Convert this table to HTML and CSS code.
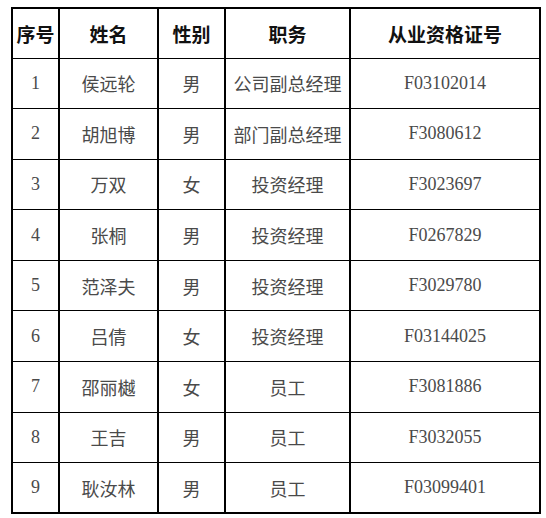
FILE: index.html
```html
<!DOCTYPE html>
<html lang="zh-CN">
<head>
<meta charset="utf-8">
<title>从业资格</title>
<link rel="stylesheet" href="styles.css">
</head>
<body>
<table class="roster">
  <colgroup>
    <col class="c1"><col class="c2"><col class="c3"><col class="c4"><col class="c5">
  </colgroup>
  <thead>
    <tr class="head"><th>序号</th><th>姓名</th><th>性别</th><th>职务</th><th>从业资格证号</th></tr>
  </thead>
  <tbody>
    <tr><td>1</td><td>侯远轮</td><td>男</td><td>公司副总经理</td><td>F03102014</td></tr>
    <tr><td>2</td><td>胡旭博</td><td>男</td><td>部门副总经理</td><td>F3080612</td></tr>
    <tr><td>3</td><td>万双</td><td>女</td><td>投资经理</td><td>F3023697</td></tr>
    <tr><td>4</td><td>张桐</td><td>男</td><td>投资经理</td><td>F0267829</td></tr>
    <tr><td>5</td><td>范泽夫</td><td>男</td><td>投资经理</td><td>F3029780</td></tr>
    <tr><td>6</td><td>吕倩</td><td>女</td><td>投资经理</td><td>F03144025</td></tr>
    <tr><td>7</td><td>邵丽樾</td><td>女</td><td>员工</td><td>F3081886</td></tr>
    <tr><td>8</td><td>王吉</td><td>男</td><td>员工</td><td>F3032055</td></tr>
    <tr><td>9</td><td>耿汝林</td><td>男</td><td>员工</td><td>F03099401</td></tr>
  </tbody>
</table>
</body>
</html>
```

FILE: styles.css
```css
html, body {
  margin: 0;
  padding: 0;
  background: #ffffff;
}
.roster {
  margin: 7px 0 0 11px;
  width: 528px;
  table-layout: fixed;
  border-collapse: collapse;
  border: 2px solid #000;
  font-family: "Liberation Serif", "Noto Sans CJK SC", serif;
  font-size: 18px;
  color: #4a4a4a;
}
.c1 { width: 47px; }
.c2 { width: 99px; }
.c3 { width: 67px; }
.c4 { width: 125px; }
.c5 { width: 190px; }
.roster th, .roster td {
  border-left: 2px solid #000;
  border-right: 2px solid #000;
  border-top: 1px solid #000;
  border-bottom: 1px solid #000;
  text-align: center;
  vertical-align: middle;
  padding: 0;
  white-space: nowrap;
}
.roster th {
  font-family: "Noto Sans CJK SC", sans-serif;
  font-weight: bold;
  color: #111;
  font-size: 19px;
}
.head { height: 50px; }
.roster tbody tr { height: 50.6px; }
.roster td {
  font-weight: normal;
}
```
